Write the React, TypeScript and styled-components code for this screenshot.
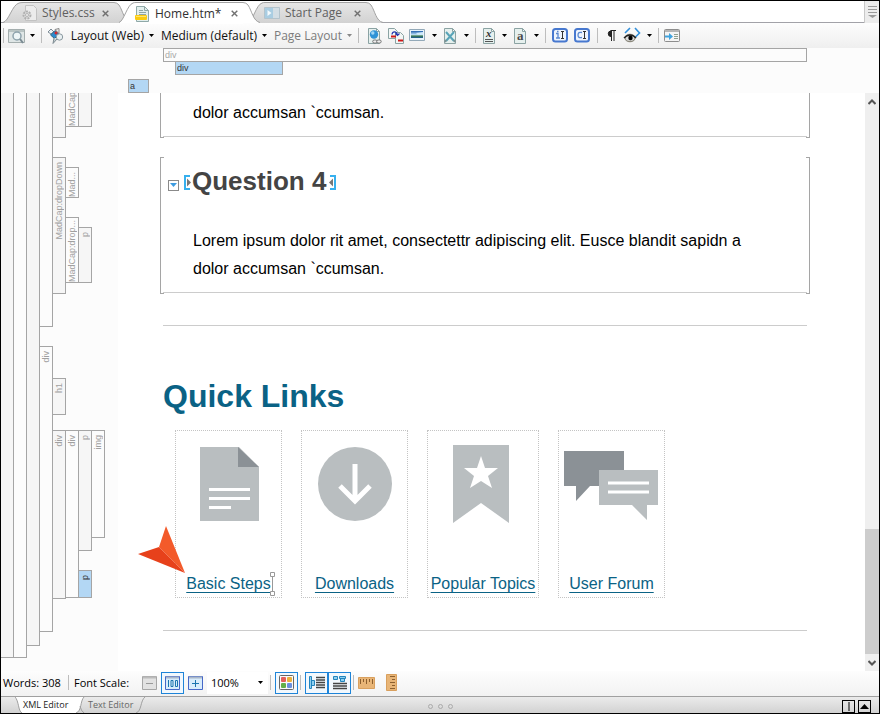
import React from "react";
import styled, { createGlobalStyle, css } from "styled-components";

const GlobalStyle = createGlobalStyle`
  *, *::before, *::after { box-sizing: border-box; }
  body { margin: 0; background: #fff; }
  button, select { font: inherit; color: inherit; }
`;

const uiFont = `"Open Sans", "Noto Sans", sans-serif`;
const pageFont = `"Liberation Sans", Arial, sans-serif`;
const line = "#a5a5a5";

const Window = styled.div`
  min-height: 100vh;
  display: flex;
  flex-direction: column;
  border: 1px solid #000;
  background: #fff;
  font-family: ${uiFont};
  font-size: 11px;
  color: #000;
  overflow: hidden;
`;

const PlainButton = styled.button`
  border: 0;
  padding: 0;
  background: none;
  display: flex;
  align-items: center;
  justify-content: center;
`;

/* ---------- document tabs ---------- */

const TabBar = styled.nav`
  display: flex;
  height: 22px;
  padding-left: 2px;
  border-bottom: 1px solid #a2a2a8;
`;

const TabItem = styled.div<{ $active?: boolean }>`
  display: flex;
  height: 22px;
  margin-right: -12px;
  position: relative;
  z-index: ${(p) => (p.$active ? 2 : 1)};
`;

const TabEdge = styled.svg`
  flex: none;
  display: block;
`;

const TabBody = styled.div<{ $active?: boolean; $width: number }>`
  display: flex;
  align-items: center;
  width: ${(p) => p.$width}px;
  height: 21px;
  margin-top: 1px;
  border-top: 1px solid #a2a2a2;
  background: ${(p) => (p.$active ? "#fff" : "linear-gradient(#e6e6e6, #d2d2d2)")};
  ${(p) => p.$active && css`height: 22px;`}
`;

const TabLabel = styled(PlainButton)<{ $muted?: boolean }>`
  gap: 5px;
  margin-left: -1px;
  font-size: 12px;
  line-height: 18px;
  white-space: nowrap;
  color: ${(p) => (p.$muted ? "#606060" : "#303030")};
`;

const TabClose = styled(PlainButton)`
  margin-left: auto;
  margin-right: 5px;
`;

const TabSpacer = styled.div`
  flex: 1;
`;

const TabListButton = styled(PlainButton)`
  width: 15px;
  height: 22px;
  border-left: 1px solid #c8c8c8;
  background: #ececec;
`;

const CloseIcon = () => (
  <svg width="7" height="7" viewBox="0 0 7 7">
    <path d="M.7.7l5.6 5.6M6.3.7L.7 6.3" stroke="#707070" strokeWidth="1.4" />
  </svg>
);

function DocTab(props: {
  label: string;
  icon: React.ReactNode;
  width: number;
  left?: "long" | "short";
  active?: boolean;
}) {
  const { label, icon, width, left = "short", active } = props;
  const id = "tab-" + label.replace(/\W/g, "");
  const fill = active ? "#fff" : `url(#${id})`;
  const gradient = (
    <linearGradient id={id} x1="0" y1="0" x2="0" y2="1">
      <stop offset="0" stopColor="#e6e6e6" />
      <stop offset="1" stopColor="#d2d2d2" />
    </linearGradient>
  );
  return (
    <TabItem $active={active}>
      {left === "long" ? (
        <TabEdge width="20" height="22" viewBox="0 0 20 22">
          <defs>{gradient}</defs>
          <path d="M0 22C6 20 9 4 16 2Q18 1.5 20 1.5V22Z" fill={fill} />
          <path d="M0 21.5C6 20 9 4 16 2Q18 1.5 20 1.5" fill="none" stroke="#a2a2a2" />
        </TabEdge>
      ) : (
        <TabEdge width="17" height="22" viewBox="0 0 17 22">
          <defs>{gradient}</defs>
          <path d="M0 22C5 20 8 4 14 2Q15 1.5 17 1.5V22Z" fill={fill} />
          <path d="M0 21.5C5 20 8 4 14 2Q15 1.5 17 1.5" fill="none" stroke="#a2a2a2" />
        </TabEdge>
      )}
      <TabBody $active={active} $width={width}>
        <TabLabel type="button" $muted={!active}>
          {icon}
          {label}
        </TabLabel>
        <TabClose type="button" aria-label={`Close ${label}`}>
          <CloseIcon />
        </TabClose>
      </TabBody>
      <TabEdge width="17" height="22" viewBox="0 0 17 22">
        <path d="M0 1.5Q3 1.5 5 4C9 10 10 20 17 22H0Z" fill={fill} />
        <path d="M0 1.5Q3 1.5 5 4C9 10 10 20 17 21.5" fill="none" stroke="#a2a2a2" />
      </TabEdge>
    </TabItem>
  );
}

/* ---------- toolbar ---------- */

const Toolbar = styled.div`
  display: flex;
  align-items: center;
  height: 25px;
  background: linear-gradient(#fdfdfd, #efefef);
`;

const Separator = styled.span`
  flex: none;
  width: 1px;
  height: 15px;
  margin: 0 4px 0 2px;
  background: #bdbdbd;
`;

const Tool = styled(PlainButton)<{ $width: number }>`
  flex: none;
  width: ${(p) => p.$width}px;
  height: 24px;
`;

const MenuTool = styled(PlainButton)<{ $width: number; $muted?: boolean }>`
  flex: none;
  justify-content: flex-end;
  width: ${(p) => p.$width}px;
  height: 24px;
  white-space: nowrap;
  font-size: 12px;
  color: ${(p) => (p.$muted ? "#7c7c7c" : "#111")};
`;

const Arrow = ({ muted }: { muted?: boolean }) => (
  <svg width="5" height="3" viewBox="0 0 5 3">
    <path d="M0 0h5L2.5 3z" fill={muted ? "#888" : "#000"} />
  </svg>
);

const Drop = ({ label, muted }: { label: string; muted?: boolean }) => (
  <Tool type="button" $width={14} aria-label={label}>
    <Arrow muted={muted} />
  </Tool>
);

const Sheet = () => (
  <path d="M1.5.5h8l3 3v12h-11z M9.5.5v3h3" fill="#e6f0ee" stroke="#8ba3a3" />
);

const PreviewIcon = () => (
  <svg width="17" height="16" viewBox="0 0 17 16">
    <path d="M.5 1.5h16v13H.5z" fill="#dfe6e6" stroke="#a4aeae" />
    <path d="M1 2h15v2H1z" fill="#b9c4c4" />
    <circle cx="9" cy="8" r="4" fill="#eef6f8" stroke="#8ea3ad" strokeWidth="1.5" />
    <path d="M12 11l3 4" stroke="#7b8b93" strokeWidth="2" />
  </svg>
);

const ConditionsIcon = () => (
  <svg width="17" height="16" viewBox="0 0 17 16">
    <path d="M1 4l3-3 3 3-3 2z" fill="#eef2f4" stroke="#7b8a95" />
    <path d="M3.500 7L8 2.500 12 6 7.500 10.500z" fill="#2a8bd0" stroke="#35657f" />
    <path d="M8 1.500l4-1v5z" fill="#eee" stroke="#8a8a8a" />
    <path d="M7.500 5h3M9 3.500v3" stroke="#d22" strokeWidth="1.500" />
    <circle cx="12.500" cy="9" r="3.200" fill="#e8eff1" stroke="#8b99a0" />
    <path d="M10 11l-4 4.500 1-5.500" fill="#c6d0d4" stroke="#7d8b92" />
  </svg>
);

const LinkIcon = () => (
  <svg width="15" height="16" viewBox="0 0 15 16">
    <Sheet />
    <circle cx="7" cy="6.5" r="4.2" fill="#2f93d6" />
    <circle cx="5.8" cy="5" r="1.7" fill="#9fd6f5" />
    <rect x="5.700" y="12" width="4.500" height="3" rx="1.500" fill="#eee" stroke="#777" />
    <rect x="9.700" y="12" width="4.500" height="3" rx="1.500" fill="#eee" stroke="#777" />
  </svg>
);

const CrossRefIcon = () => (
  <svg width="16" height="16" viewBox="0 0 16 16">
    <path d="M.5.5h6l3 3v7h-9z" fill="#f2f6f5" stroke="#8ba3a3" />
    <path d="M7.500 4.500h5l3 3v8h-8z" fill="#f2f6f5" stroke="#8ba3a3" />
    <path d="M3 8.500h5M10 12.500h5" stroke="#d01818" strokeWidth="2" />
    <path d="M4 6.500C4.500 3 8.500 3 9.500 7M7.500 5.500l2 2 2-2" fill="none" stroke="#2438b0" strokeWidth="1.200" />
  </svg>
);

const ImageIcon = () => (
  <svg width="16" height="16" viewBox="0 0 16 16">
    <defs>
      <linearGradient id="sky" x1="0" y1="0" x2="0" y2="1">
        <stop offset="0" stopColor="#1f5fae" />
        <stop offset=".55" stopColor="#c7e6fb" />
        <stop offset=".7" stopColor="#3d7a4a" />
        <stop offset="1" stopColor="#1c5a9a" />
      </linearGradient>
    </defs>
    <path d="M.5 1.500h15v11H.5z" fill="#e9f3fb" stroke="#93a9b8" />
    <path d="M2 3h12v7H2z" fill="url(#sky)" />
    <path d="M7 5l7-1v3H9z" fill="#cfe9fb" />
  </svg>
);

const PageCrossIcon = () => (
  <svg width="14" height="16" viewBox="0 0 14 16">
    <Sheet />
    <path d="M3 4l8 9M11 4l-8 9" stroke="#58a4b8" strokeWidth="2" />
    <path d="M3 12l-1 2M11 12l1 2" stroke="#7d9294" strokeWidth="2" />
  </svg>
);

const VariableIcon = () => (
  <svg width="14" height="16" viewBox="0 0 14 16">
    <Sheet />
    <text x="4" y="9" fontFamily="Liberation Serif, serif" fontSize="11" fontWeight="700" fontStyle="italic" fill="#333">x</text>
    <path d="M3 11.500h8M3 13.500h8" stroke="#555" />
  </svg>
);

const CharacterIcon = () => (
  <svg width="14" height="16" viewBox="0 0 14 16">
    <Sheet />
    <text x="4" y="12" fontFamily="Liberation Serif, serif" fontSize="13" fontWeight="700" fill="#4a4a4a">a</text>
  </svg>
);

const MarkIcon = ({ c }: { c?: boolean }) => (
  <svg width="16" height="15" viewBox="0 0 16 15">
    <rect x="1" y="1" width="14" height="12.500" rx="2.500" fill="#eef4fd" stroke="#4778cf" strokeWidth="2" />
    {c ? (
      <path d="M8 4.500Q4 3.500 4 7T8 9.500" fill="none" stroke="#5a88d0" strokeWidth="1.300" />
    ) : (
      <path d="M4 5.500h2v4M4 10h4M5 3.500h1.500" fill="none" stroke="#5a88d0" strokeWidth="1.300" />
    )}
    <path d="M9 3.500h3M10.500 3.500v7M9 10.500h3" stroke="#333" fill="none" />
  </svg>
);

const PilcrowIcon = () => (
  <svg width="9" height="12" viewBox="0 0 9 12">
    <path d="M4 1v5.500A2.750 2.750 0 0 1 4 1z" fill="#222" stroke="#222" />
    <path d="M3.500.5H9M4.500 1v10M7 1v10" stroke="#222" />
  </svg>
);

const EyeIcon = () => (
  <svg width="18" height="17" viewBox="0 0 18 17">
    <path d="M7 1L2 6M12 1l4.500 5L12 10.500" fill="none" stroke="#3290dc" strokeWidth="1.600" />
    <ellipse cx="7" cy="11" rx="5.500" ry="4.200" fill="#8b887c" />
    <path d="M1 11Q7 5 13 11" fill="none" stroke="#222" strokeWidth="1.500" />
    <ellipse cx="7" cy="11.500" rx="4.300" ry="2.300" fill="#ddd" />
    <circle cx="7.500" cy="11" r="2.200" fill="#000" />
  </svg>
);

const InsertPaneIcon = () => (
  <svg width="16" height="14" viewBox="0 0 16 14">
    <rect x=".5" y=".5" width="15" height="12" rx="1" fill="#f4f4f4" stroke="#8d8d8d" />
    <path d="M1 2h14" stroke="#b5b5b5" strokeWidth="2" />
    <path d="M1 6.500h4V4l4 3.500L5 11V8.500H1z" fill="#3fa3df" />
    <path d="M10 5.500h4M10 7.500h4M10 9.500h4" stroke="#8fa08f" />
  </svg>
);

/* ---------- structure bars ---------- */

const SpanBars = styled.div`
  height: 45px;
  padding: 0 72px 0 127px;
  background: #fcfcfc;
  font-family: ${pageFont};
  font-size: 9px;
  line-height: 12px;
`;

const SpanBar = styled.div<{ $selected?: boolean; $indent: number; $width?: number }>`
  height: 14px;
  margin-left: ${(p) => p.$indent}px;
  width: ${(p) => (p.$width ? `${p.$width}px` : "auto")};
  padding: 0 1px;
  border: 1px solid ${line};
  color: ${(p) => (p.$selected ? "#333" : "#a8a8a8")};
  background: ${(p) => (p.$selected ? "#b3d7f4" : "#fcfcfc")};
  & + & { margin-top: -1px; }
  & + & + & { margin-top: 4px; }
`;

const Workspace = styled.div`
  flex: 1;
  display: flex;
  background: #fff;
`;

const Gutter = styled.aside`
  flex: none;
  display: flex;
  width: 117px;
  background: #fcfcfc;
`;

const Level = styled.div`
  width: 13px;
`;

const Block = styled.div<{ $h: number; $gap?: number; $shade?: boolean; $selected?: boolean; $open?: boolean; $end?: boolean }>`
  display: flex;
  flex-direction: column;
  justify-content: ${(p) => (p.$end ? "flex-end" : "flex-start")};
  width: 14px;
  margin-left: -1px;
  margin-top: ${(p) => p.$gap ?? 0}px;
  height: ${(p) => p.$h}px;
  padding: ${(p) => (p.$end ? 0 : 4)}px 0 0;
  border: 1px solid ${line};
  border-top-width: ${(p) => (p.$open ? 0 : 1)}px;
  overflow: hidden;
  background: ${(p) => (p.$selected ? "#b3d7f4" : p.$shade ? "#f6f6f6" : "#fcfcfc")};
  color: ${(p) => (p.$selected ? "#333" : "#a0a0a0")};
`;

const BlockName = styled.span`
  writing-mode: vertical-rl;
  transform: rotate(180deg);
  font-family: ${pageFont};
  font-size: 9px;
  line-height: 12px;
  white-space: nowrap;
`;

type BlockSpec = { h: number; gap?: number; name?: string; selected?: boolean; open?: boolean; end?: boolean };

const levels: BlockSpec[][] = [
  [{ h: 565, open: true }],
  [{ h: 565, open: true }],
  [{ h: 553, open: true }],
  [{ h: 234, open: true }, { gap: 19, h: 286, name: "div" }],
  [
    { h: 45, open: true },
    { gap: 19, h: 137, name: "MadCap:dropDown" },
    { gap: 84, h: 37, name: "h1" },
    { gap: 15, h: 169, name: "div" },
  ],
  [
    { h: 34, open: true, name: "MadCap", end: true },
    { gap: 40, h: 31, name: "Mad...", end: true },
    { gap: 19, h: 66, name: "MadCap:drop...", end: true },
    { gap: 147, h: 168, name: "div" },
  ],
  [
    { h: 34, open: true },
    { gap: 100, h: 56, name: "p" },
    { gap: 147, h: 121, name: "p" },
    { gap: 19, h: 28, name: "p", selected: true },
  ],
  [{ gap: 337, h: 108, name: "img" }],
];

/* ---------- document ---------- */

const Page = styled.main`
  flex: 1;
  min-width: 0;
  padding: 0 55px 39px 42px;
  font-family: ${pageFont};
  font-size: 16px;
  line-height: 28px;
  color: #000;
`;

const tick = `linear-gradient(${line}, ${line})`;

const Question = styled.section<{ $cut?: boolean }>`
  padding: 0 2px 1px;
  margin-bottom: ${(p) => (p.$cut ? 19 : 31)}px;
  border: solid ${line};
  border-width: 0 1px;
  background-image: ${tick}, ${tick}${(p) => (p.$cut ? "" : `, ${tick}, ${tick}`)};
  background-repeat: no-repeat;
  background-size: 3px 1px;
  background-position: left bottom, right bottom, left top, right top;
`;

const QuestionBody = styled.div`
  border-bottom: 1px solid #ccc;
  padding: 6px 4px 9px;
`;

const QuestionTitle = styled.div`
  display: flex;
  align-items: center;
  gap: 4px;
  padding: 2px 0 0 1px;
`;

const Heading = styled.h3`
  display: flex;
  align-items: center;
  gap: 1px;
  margin: 0;
  font-size: 26px;
  line-height: 32px;
  color: #444;
  svg { margin-top: 2px; }
`;

const Answer = styled.p<{ $spaced?: boolean }>`
  margin: ${(p) => (p.$spaced ? 30 : 0)}px 0 0;
  padding: 0 40px 0 26px;
`;

const ToggleButton = styled(PlainButton)`
  width: 11px;
  height: 11px;
  margin-top: 8px;
  border: 1px solid #8a8a8a;
`;

const Rule = styled.hr`
  height: 1px;
  margin: 0 3px;
  border: 0;
  background: #ccc;
`;

const Title = styled.h1`
  margin: 50px 3px 14px;
  font-size: 32px;
  line-height: 40px;
  color: #0a6285;
`;

const Cards = styled.div`
  display: flex;
  gap: 19px;
  margin: 0 0 32px 15px;
`;

const Card = styled.div<{ $width: number }>`
  position: relative;
  display: flex;
  flex-direction: column;
  align-items: center;
  justify-content: space-between;
  width: ${(p) => p.$width}px;
  height: 168px;
  padding-top: 12px;
  border: 1px dotted #c4c4c4;
`;

const CardLink = styled.a`
  color: #0a6285;
  line-height: 26px;
  white-space: nowrap;
  text-underline-offset: 3px;
`;

const Pointer = styled.svg`
  position: absolute;
  left: -38px;
  top: 95px;
`;

const Caret = styled.svg`
  position: absolute;
  right: 6px;
  bottom: 1px;
`;

/* ---------- scrollbar ---------- */

const ScrollTrack = styled.div`
  flex: none;
  display: flex;
  flex-direction: column;
  width: 14px;
  background: #efefef;
`;

const ScrollButton = styled(PlainButton)`
  height: 17px;
`;

const ScrollThumb = styled.div`
  height: 125px;
  margin-top: auto;
  background: #cdcdcd;
`;

/* ---------- status bar ---------- */

const StatusBar = styled.div`
  display: flex;
  align-items: center;
  height: 26px;
  padding: 0 0 2px 1px;
  border-bottom: 1px solid #a0a0a0;
  background: linear-gradient(#fdfdfd, #f2f2f2);
`;

const StatusText = styled.span<{ $width: number }>`
  flex: none;
  width: ${(p) => p.$width}px;
  padding-left: 1px;
  white-space: nowrap;
  font-size: 11px;
`;

const Toggle = styled(PlainButton)<{ $on?: boolean }>`
  flex: none;
  width: 23px;
  height: 22px;
  ${(p) => p.$on && css`border: 1px solid #1e84d8; background: #f2f8fd;`}
`;

const ZoomBox = styled.label`
  display: flex;
  align-items: center;
  width: 61px;
  height: 22px;
  padding-right: 5px;
  background: #fff;
  select {
    flex: 1;
    min-width: 0;
    height: 20px;
    padding: 0 0 0 4px;
    border: 0;
    background: none;
    appearance: none;
    font-size: 11px;
  }
`;

const Rulers = styled.div`
  display: flex;
  align-items: center;
  gap: 11px;
`;

const ScaleIcon = ({ kind }: { kind: "minus" | "full" | "plus" }) => {
  const off = kind === "minus";
  return (
    <svg width="15" height="14" viewBox="0 0 15 14">
      <path d="M.5.5h14v13H.5z" fill={off ? "#e2e2e2" : "#d8ecfb"} stroke={off ? "#a6a6a6" : "#4668c8"} />
      <path d="M1 1.500h13" stroke={off ? "#bbb" : "#a9b6c8"} strokeWidth="2" />
      {kind === "full" ? (
        <path d="M3.500 4v7M6 4.500h2v6H6zM10.500 4.500h2v6h-2z" fill="none" stroke="#1a74ae" />
      ) : (
        <path d={off ? "M4 7.500h7" : "M4 7.500h7M7.500 4v7"} stroke={off ? "#999" : "#1a74ae"} />
      )}
    </svg>
  );
};

const GridIcon = () => (
  <svg width="15" height="15" viewBox="0 0 15 15">
    <rect x=".5" y=".5" width="14" height="14" rx="1" fill="#fafafa" stroke="#666" />
    <rect x="2" y="2" width="5" height="5" rx="1" fill="#e4605a" />
    <rect x="8" y="2" width="5" height="5" rx="1" fill="#edb03a" />
    <rect x="2" y="8" width="5" height="5" rx="1" fill="#64b048" />
    <rect x="8" y="8" width="5" height="5" rx="1" fill="#6b90de" />
  </svg>
);

const BlockBarsIcon = () => (
  <svg width="16" height="15" viewBox="0 0 16 15">
    <path d="M.5 1.500h2v12h-2zM2.500 5.500h3v5h-3z" fill="#8fd0f0" stroke="#2384bc" />
    <path d="M7 2.500h9M7 5h9M7 7.500h9M7 10h9M7 12.500h9" stroke="#444" strokeWidth="1.400" />
  </svg>
);

const SpanBarsIcon = () => (
  <svg width="16" height="15" viewBox="0 0 16 15">
    <path d="M1.500 1.500h4v3h-4zM7.500 1.500h6v2h-6zM8.500 3.500h4v3h-4z" fill="#8fd0f0" stroke="#2384bc" />
    <path d="M1 8.500h14M1 11h14M1 13.500h14" stroke="#444" strokeWidth="1.400" />
  </svg>
);

const RulerH = () => (
  <svg width="17" height="12" viewBox="0 0 17 12">
    <path d="M.5.5h16v11H.5z" fill="#e8b577" stroke="#d9a05e" />
    <path d="M2.500 2v5M5.500 2v3M8.500 2v5M11.500 2v3M14.500 2v5" stroke="#8c5f2e" />
  </svg>
);

const RulerV = () => (
  <svg width="11" height="17" viewBox="0 0 11 17">
    <path d="M.5.5h10v16H.5z" fill="#e8b577" stroke="#d9a05e" />
    <path d="M4 2.500h5M6 5.500h3M4 8.500h5M6 11.500h3M4 14.500h5" stroke="#8c5f2e" />
  </svg>
);

/* ---------- view tabs ---------- */

const ViewBar = styled.footer`
  display: flex;
  align-items: stretch;
  height: 16px;
  padding-left: 14px;
  background: linear-gradient(#ebebeb, #d2d2d2);
`;

const ViewTab = styled(PlainButton)<{ $active?: boolean }>`
  height: 16px;
  width: ${(p) => (p.$active ? 54 : 49)}px;
  justify-content: flex-start;
  padding-left: 1px;
  font-size: 9px;
  line-height: 16px;
  white-space: nowrap;
  background: ${(p) => (p.$active ? "#fff" : "none")};
  color: ${(p) => (p.$active ? "#222" : "#666")};
`;

const ViewEnds = styled.div`
  flex: 1;
  display: flex;
  justify-content: flex-end;
  padding: 3px 8px 0 0;
  gap: 3px;
`;

const Grip = styled.svg`
  margin: 3px auto 0 282px;
`;

const SplitButton = styled(PlainButton)`
  width: 13px;
  height: 13px;
  border: 1px solid #000;
`;

export default function App() {
  return (
    <>
      <GlobalStyle />
      <Window>
        <TabBar aria-label="Open documents">
          <DocTab
            label="Styles.css"
            width={91}
            left="long"
            icon={
              <svg width="15" height="16" viewBox="0 0 15 16">
                <path d="M3.500.5h8l3 3v12h-11z" fill="#ececec" stroke="#c2c2c2" />
                <circle cx="5" cy="10" r="3.500" fill="#ddd" stroke="#b0b0b0" strokeWidth="2" strokeDasharray="2 1" />
                <circle cx="5" cy="10" r="1.500" fill="#f2f2f2" stroke="#b4b4b4" />
              </svg>
            }
          />
          <DocTab
            label="Home.htm*"
            width={107}
            active
            icon={
              <svg width="15" height="16" viewBox="0 0 15 16">
                <path d="M1.500.5h8l4 4v11h-12z" fill="#e3efed" stroke="#8fa9a8" />
                <path d="M9.500.5v4h4M4 4.500h4M4 6.500h7M4 8.500h7" fill="none" stroke="#8fa6a4" />
                <rect x="0" y="9" width="12" height="5" rx="1" fill="#fbcb10" />
                <path d="M1 10.500h10" stroke="#ffe56b" />
              </svg>
            }
          />
          <DocTab
            label="Start Page"
            width={101}
            icon={
              <svg width="16" height="12" viewBox="0 0 16 12">
                <path d="M.5.5h15v11H.5z" fill="#a9cde2" stroke="#b3c3cc" />
                <path d="M9 1h6v10H9z" fill="#d3dee5" />
                <path d="M3.500 3l4 3-4 3z" fill="#f4fafd" />
              </svg>
            }
          />
          <TabSpacer />
          <TabListButton type="button" aria-label="Tab list">
            <svg width="9" height="12" viewBox="0 0 9 12">
              <path d="M0 .5h9M0 3.500h9M0 6.500h9" stroke="#999" />
              <path d="M0 9h9L4.500 12z" fill="#999" />
            </svg>
          </TabListButton>
        </TabBar>

        <Toolbar role="toolbar">
          <Separator />
          <Tool type="button" $width={17} aria-label="Preview"><PreviewIcon /></Tool>
          <Drop label="Preview options" />
          <Separator />
          <Tool type="button" $width={18} aria-label="Conditions"><ConditionsIcon /></Tool>
          <MenuTool type="button" $width={80}>Layout (Web)</MenuTool>
          <Drop label="Choose layout" />
          <MenuTool type="button" $width={99}>Medium (default)</MenuTool>
          <Drop label="Choose medium" />
          <MenuTool type="button" $width={71} $muted>Page Layout</MenuTool>
          <Drop label="Choose page layout" muted />
          <Separator />
          <Tool type="button" $width={22} aria-label="Insert hyperlink"><LinkIcon /></Tool>
          <Tool type="button" $width={22} aria-label="Insert cross-reference"><CrossRefIcon /></Tool>
          <Tool type="button" $width={20} aria-label="Insert image"><ImageIcon /></Tool>
          <Drop label="Image options" />
          <Tool type="button" $width={18} aria-label="Insert snippet"><PageCrossIcon /></Tool>
          <Drop label="Snippet options" />
          <Separator />
          <Tool type="button" $width={17} aria-label="Insert variable"><VariableIcon /></Tool>
          <Drop label="Variable options" />
          <Tool type="button" $width={18} aria-label="Insert character"><CharacterIcon /></Tool>
          <Drop label="Character options" />
          <Separator />
          <Tool type="button" $width={19} aria-label="Index marker"><MarkIcon /></Tool>
          <Tool type="button" $width={26} aria-label="Concept marker"><MarkIcon c /></Tool>
          <Separator />
          <Tool type="button" $width={19} aria-label="Show marks"><PilcrowIcon /></Tool>
          <Tool type="button" $width={21} aria-label="Show tags"><EyeIcon /></Tool>
          <Drop label="Tag options" />
          <Separator />
          <Tool type="button" $width={18} aria-label="Open pane"><InsertPaneIcon /></Tool>
        </Toolbar>

        <SpanBars>
          <SpanBar $indent={35}>div</SpanBar>
          <SpanBar $indent={47} $width={108} $selected>div</SpanBar>
          <SpanBar $indent={0} $width={21} $selected>a</SpanBar>
        </SpanBars>

        <Workspace>
          <Gutter>
            {levels.map((blocks, i) => (
              <Level key={i}>
                {blocks.map((b, j) => (
                  <Block key={j} $h={b.h} $gap={b.gap} $shade={i % 2 === 0} $selected={b.selected} $open={b.open} $end={b.end}>
                    {b.name && <BlockName>{b.name}</BlockName>}
                  </Block>
                ))}
              </Level>
            ))}
          </Gutter>

          <Page>
            <Question $cut>
              <QuestionBody>
                <Answer>dolor accumsan `ccumsan.</Answer>
              </QuestionBody>
            </Question>

            <Question>
              <QuestionBody>
                <QuestionTitle>
                  <ToggleButton type="button" aria-label="Toggle answer">
                    <svg width="7" height="4" viewBox="0 0 7 4">
                      <path d="M0 0h7L3.500 4z" fill="#3c9be0" />
                    </svg>
                  </ToggleButton>
                  <Heading>
                    <svg width="8" height="15" viewBox="0 0 8 15">
                      <path d="M7 1H2v13h5" fill="none" stroke="#36b0ee" strokeWidth="2" />
                      <path d="M4 3.500v8l4-4z" fill="#777" />
                    </svg>
                    Question 4
                    <svg width="9" height="15" viewBox="0 0 9 15">
                      <path d="M3 1h5v13H3" fill="none" stroke="#36b0ee" strokeWidth="2" />
                      <path d="M6 3.500v8l-4-4z" fill="#777" />
                    </svg>
                  </Heading>
                </QuestionTitle>
                <Answer $spaced>
                  Lorem ipsum dolor rit amet, consectettr adipiscing elit. Eusce blandit sapidn a dolor accumsan `ccumsan.
                </Answer>
              </QuestionBody>
            </Question>

            <Rule />
            <Title>Quick Links</Title>

            <Cards>
              <Card $width={107}>
                <svg width="80" height="84" viewBox="0 0 80 84">
                  <path d="M11 4h39l20 20v54H11z" fill="#b9bec0" />
                  <path d="M49 4v20h21z" fill="#8b9196" />
                  <path d="M20 46.500h41M20 55.500h41M20 64.500h22" stroke="#fff" strokeWidth="3" />
                </svg>
                <CardLink href="#basic-steps">Basic Steps</CardLink>
                <Caret width="5" height="24" viewBox="0 0 5 24">
                  <path d="M2.500 4v16" stroke="#999" />
                  <path d="M.5.5h4v4h-4zM.5 19.500h4v4h-4z" fill="#fff" stroke="#999" />
                </Caret>
                <Pointer width="50" height="50" viewBox="0 0 50 50">
                  <path d="M28 0L21 21 47 47z" fill="#f35a2a" />
                  <path d="M0 28L21 21 47 47z" fill="#e7411b" />
                </Pointer>
              </Card>
              <Card $width={107}>
                <svg width="80" height="84" viewBox="0 0 80 84">
                  <circle cx="40" cy="41" r="37" fill="#b9bec0" />
                  <path d="M40 21v36M25 43l15 15 15-15" fill="none" stroke="#fff" strokeWidth="5" />
                </svg>
                <CardLink href="#downloads">Downloads</CardLink>
              </Card>
              <Card $width={112}>
                <svg width="80" height="84" viewBox="0 0 80 84">
                  <path d="M10 2h56v78L38 60 10 80z" fill="#b9bec0" />
                  <path d="M38 13l4 12h13L45 33l4 12-11-7-11 7 4-12-10-8h13z" fill="#fff" />
                </svg>
                <CardLink href="#popular-topics">Popular Topics</CardLink>
              </Card>
              <Card $width={107}>
                <svg width="96" height="84" viewBox="0 0 96 84">
                  <path d="M0 8h60v35H26L12 58V43H0z" fill="#8b9196" />
                  <path d="M35 27h59v35H83v15L68 62H35z" fill="#b9bec0" />
                  <path d="M44 40h41M44 49h41" stroke="#fff" strokeWidth="3" />
                </svg>
                <CardLink href="#user-forum">User Forum</CardLink>
              </Card>
            </Cards>
            <Rule />
          </Page>

          <ScrollTrack>
            <ScrollButton type="button" aria-label="Scroll up">
              <svg width="8" height="6" viewBox="0 0 8 6">
                <path d="M.5 5L4 1.500 7.500 5" fill="none" stroke="#555" strokeWidth="2" />
              </svg>
            </ScrollButton>
            <ScrollThumb />
            <ScrollButton type="button" aria-label="Scroll down">
              <svg width="8" height="6" viewBox="0 0 8 6">
                <path d="M.5 1L4 4.500 7.500 1" fill="none" stroke="#555" strokeWidth="2" />
              </svg>
            </ScrollButton>
          </ScrollTrack>
        </Workspace>

        <StatusBar>
          <StatusText $width={64}>Words: 308</StatusText>
          <Separator />
          <StatusText $width={65}>Font Scale:</StatusText>
          <Toggle type="button" aria-label="Decrease font scale"><ScaleIcon kind="minus" /></Toggle>
          <Toggle type="button" $on aria-label="Reset font scale"><ScaleIcon kind="full" /></Toggle>
          <Toggle type="button" aria-label="Increase font scale"><ScaleIcon kind="plus" /></Toggle>
          <ZoomBox>
            <select aria-label="Zoom" defaultValue="100%">
              <option>100%</option>
            </select>
            <Arrow />
          </ZoomBox>
          <Separator />
          <Toggle type="button" $on aria-label="Show markers"><GridIcon /></Toggle>
          <Separator />
          <Toggle type="button" $on aria-label="Show block bars"><BlockBarsIcon /></Toggle>
          <Toggle type="button" $on aria-label="Show span bars"><SpanBarsIcon /></Toggle>
          <Separator />
          <Rulers>
            <PlainButton type="button" aria-label="Horizontal ruler"><RulerH /></PlainButton>
            <PlainButton type="button" aria-label="Vertical ruler"><RulerV /></PlainButton>
          </Rulers>
        </StatusBar>

        <ViewBar>
          <TabEdge width="7" height="16" viewBox="0 0 7 16">
            <path d="M0 0h7v16C3 14 4 4 0 0z" fill="#fff" />
            <path d="M0 0C4 4 3 14 7 16" fill="none" stroke="#a0a0a0" />
          </TabEdge>
          <ViewTab type="button" $active>XML Editor</ViewTab>
          <TabEdge width="11" height="16" viewBox="0 0 11 16">
            <path d="M0 0h8C4 4 6 14 0 16z" fill="#fff" />
            <path d="M8 0C4 4 6 14 0 16M4 9Q5 14 8 16" fill="none" stroke="#a0a0a0" />
          </TabEdge>
          <ViewTab type="button">Text Editor</ViewTab>
          <TabEdge width="10" height="16" viewBox="0 0 10 16">
            <path d="M9 0C4 4 6 14 0 16" fill="none" stroke="#a0a0a0" />
          </TabEdge>
          <ViewEnds>
            <Grip width="25" height="7" viewBox="0 0 25 7">
              <g fill="none" stroke="#aaa">
                <circle cx="2.500" cy="3.500" r="2" />
                <circle cx="12.500" cy="3.500" r="2" />
                <circle cx="22.500" cy="3.500" r="2" />
              </g>
            </Grip>
            <SplitButton type="button" aria-label="Split view">
              <svg width="2" height="9" viewBox="0 0 2 9"><path d="M1 0v9" stroke="#000" /></svg>
            </SplitButton>
            <SplitButton type="button" aria-label="Expand view">
              <svg width="9" height="5" viewBox="0 0 9 5"><path d="M0 5h9L4.500 0z" fill="#000" /></svg>
            </SplitButton>
          </ViewEnds>
        </ViewBar>
      </Window>
    </>
  );
}
